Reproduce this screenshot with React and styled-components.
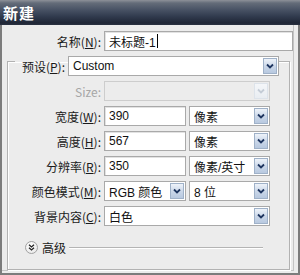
import React from "react";
import styled, { createGlobalStyle } from "styled-components";

const GlobalStyle = createGlobalStyle`
  body {
    margin: 0;
    background: #ececec;
  }
`;

const Window = styled.div`
  width: 300px;
  height: 275px;
  display: flex;
  flex-direction: column;
  font-family: "Liberation Sans", "Noto Sans CJK SC", sans-serif;
  font-size: 12px;
  color: #111;
`;

const TitleBar = styled.div`
  height: 25px;
  flex: none;
  display: flex;
  align-items: center;
  padding-left: 3px;
  background: linear-gradient(#8d9199 0, #646c79 3px, #4b5567 9px, #323c4f 16px, #1f2636 23px, #2b3342 25px);
  color: #fff;
  font-family: "Noto Sans CJK SC", sans-serif;
  font-size: 15px;
  font-weight: bold;
  letter-spacing: 1px;
`;

const Frame = styled.div`
  flex: 1;
  min-height: 0;
  display: flex;
  flex-direction: column;
  background: #ececec;
  border: 2px solid #7c7c7c;
  border-top: none;
  box-shadow: inset -4px -2px 0 #ececec, inset -5px -3px 0 #c4c4c4;
`;

const Row = styled.div`
  display: flex;
  align-items: center;
  gap: 3px;
  height: 20px;
  margin-top: ${(p) => p.$top || 5}px;
`;

const Label = styled.label`
  flex: none;
  width: ${(p) => p.$width}px;
  text-align: right;
  white-space: nowrap;
  font-family: "Noto Sans CJK SC", sans-serif;
  font-size: 12px;
  color: ${(p) => (p.$disabled ? "#a6a6a6" : "#1a1a1a")};
  u {
    text-underline-offset: 1px;
  }
`;

const TextBox = styled.div`
  box-sizing: border-box;
  width: ${(p) => p.$width}px;
  height: 20px;
  display: flex;
  align-items: center;
  padding-left: 4px;
  background: #fff;
  border: 1px solid #a9a9a9;
  box-shadow: inset 1px 1px 0 #e2e2e2;
  white-space: nowrap;
`;

const Caret = styled.span`
  display: inline-block;
  width: 1px;
  height: 14px;
  margin-left: 1px;
  background: #000;
`;

const SelectBox = styled.div`
  box-sizing: border-box;
  width: ${(p) => p.$width}px;
  height: 20px;
  display: flex;
  align-items: stretch;
  background: ${(p) => (p.$disabled ? "#ececec" : "#fff")};
  border: 1px solid ${(p) => (p.$disabled ? "#cdcdcd" : "#a9a9a9")};
  white-space: nowrap;
`;

const SelectText = styled.div`
  flex: 1;
  display: flex;
  align-items: center;
  padding-left: 4px;
  overflow: hidden;
`;

const DropButton = styled.div`
  flex: none;
  box-sizing: border-box;
  width: 14px;
  margin: 1px;
  display: flex;
  align-items: center;
  justify-content: center;
  border: 1px solid ${(p) => (p.$disabled ? "#dde3ea" : "#9fb1c8")};
  background: ${(p) =>
    p.$disabled
      ? "linear-gradient(#f4f6f9, #e9edf2)"
      : "linear-gradient(#eef3fa, #c9d6e8 55%, #b8c9e0)"};
`;

const Group = styled.fieldset`
  box-sizing: border-box;
  width: 283px;
  margin: -5px 0 0 5px;
  padding: 0 0 12px 0;
  border: 1px solid #b2b2b2;
  box-shadow: inset 1px 1px 0 #fff, 1px 1px 0 #fff;
  min-width: 0;
`;

const Legend = styled.legend`
  margin-left: 7px;
  padding: 10px 0 0 0;
  display: flex;
  align-items: center;
  gap: 3px;
`;

const AdvancedRow = styled.div`
  display: flex;
  align-items: center;
  height: 20px;
  margin-top: 11px;
  padding-left: 17px;
`;

const RoundButton = styled.div`
  box-sizing: border-box;
  width: 13px;
  height: 13px;
  border-radius: 50%;
  border: 1px solid #a2a2a2;
  background: radial-gradient(circle at 40% 35%, #ffffff, #e4e4e4);
  display: flex;
  align-items: center;
  justify-content: center;
  flex: none;
`;

const AdvancedText = styled.span`
  margin-left: 4px;
  font-family: "Noto Sans CJK SC", sans-serif;
  color: #1a1a1a;
`;

const Rule = styled.div`
  flex: 1;
  margin: 1px 26px 0 3px;
  border-top: 1px solid #b4b4b4;
  border-bottom: 1px solid #fff;
`;

const Chevron = ({ disabled }) => (
  <svg width="8" height="6" viewBox="0 0 8 6">
    <polyline
      points="1,1.5 4,4.5 7,1.5"
      fill="none"
      stroke={disabled ? "#c4ccd6" : "#1e3560"}
      strokeWidth="1.8"
    />
  </svg>
);

const DoubleChevron = () => (
  <svg width="7" height="7" viewBox="0 0 7 7">
    <polyline points="1,0.8 3.5,3 6,0.8" fill="none" stroke="#222" strokeWidth="1.3" />
    <polyline points="1,3.8 3.5,6 6,3.8" fill="none" stroke="#222" strokeWidth="1.3" />
  </svg>
);

const Select = ({ width, value, disabled }) => (
  <SelectBox $width={width} $disabled={disabled}>
    <SelectText>{value}</SelectText>
    <DropButton $disabled={disabled}>
      <Chevron disabled={disabled} />
    </DropButton>
  </SelectBox>
);

const LABEL_W = 93;

export default function App() {
  return (
    <Window>
      <GlobalStyle />
      <TitleBar>新建</TitleBar>
      <Frame>
        <Row $top={6}>
          <Label $width={99}>
            名称(<u>N</u>):
          </Label>
          <TextBox $width={189}>
            未标题-1
            <Caret />
          </TextBox>
        </Row>

        <Group>
          <Legend>
            <Label $width={50}>
              预设(<u>P</u>):
            </Label>
            <Select width={211} value="Custom" />
          </Legend>

          <Row>
            <Label $width={LABEL_W} $disabled>
              Size:
            </Label>
            <Select width={166} value="" disabled />
          </Row>
          <Row>
            <Label $width={LABEL_W}>
              宽度(<u>W</u>):
            </Label>
            <TextBox $width={82}>390</TextBox>
            <Select width={81} value="像素" />
          </Row>
          <Row>
            <Label $width={LABEL_W}>
              高度(<u>H</u>):
            </Label>
            <TextBox $width={82}>567</TextBox>
            <Select width={81} value="像素" />
          </Row>
          <Row>
            <Label $width={LABEL_W}>
              分辨率(<u>R</u>):
            </Label>
            <TextBox $width={82}>350</TextBox>
            <Select width={81} value="像素/英寸" />
          </Row>
          <Row>
            <Label $width={LABEL_W}>
              颜色模式(<u>M</u>):
            </Label>
            <Select width={82} value="RGB 颜色" />
            <Select width={81} value="8 位" />
          </Row>
          <Row>
            <Label $width={LABEL_W}>
              背景内容(<u>C</u>):
            </Label>
            <Select width={166} value="白色" />
          </Row>

          <AdvancedRow>
            <RoundButton>
              <DoubleChevron />
            </RoundButton>
            <AdvancedText>高级</AdvancedText>
            <Rule />
          </AdvancedRow>
        </Group>
      </Frame>
    </Window>
  );
}
